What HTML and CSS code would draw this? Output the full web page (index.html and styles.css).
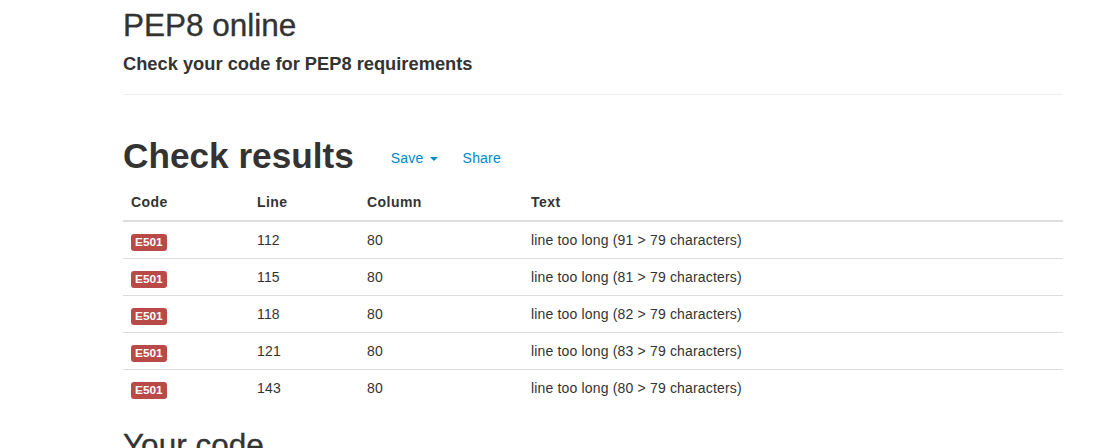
FILE: index.html
```html
<!DOCTYPE html>
<html>
<head>
<meta charset="utf-8">
<title>PEP8 online</title>
<link rel="stylesheet" href="styles.css">
</head>
<body>
<div class="container">
  <header class="page-header">
    <h1 class="site-title">PEP8 online</h1>
    <p class="site-sub">Check your code for PEP8 requirements</p>
  </header>

  <section class="results">
    <div class="results-head">
      <h2 class="results-title">Check results</h2>
      <nav class="results-actions">
        <a href="#" class="action">Save <span class="caret"></span></a>
        <a href="#" class="action">Share</a>
      </nav>
    </div>
    <table class="table">
      <thead>
        <tr><th class="c-code">Code</th><th class="c-line">Line</th><th class="c-col">Column</th><th>Text</th></tr>
      </thead>
      <tbody>
        <tr><td><span class="label">E501</span></td><td>112</td><td>80</td><td>line too long (91 &gt; 79 characters)</td></tr>
        <tr><td><span class="label">E501</span></td><td>115</td><td>80</td><td>line too long (81 &gt; 79 characters)</td></tr>
        <tr><td><span class="label">E501</span></td><td>118</td><td>80</td><td>line too long (82 &gt; 79 characters)</td></tr>
        <tr><td><span class="label">E501</span></td><td>121</td><td>80</td><td>line too long (83 &gt; 79 characters)</td></tr>
        <tr><td><span class="label">E501</span></td><td>143</td><td>80</td><td>line too long (80 &gt; 79 characters)</td></tr>
      </tbody>
    </table>
  </section>

  <section class="code">
    <h2 class="code-title">Your code</h2>
  </section>
</div>
</body>
</html>
```

FILE: styles.css
```css
html, body {
  margin: 0;
  padding: 0;
  background: #fff;
}
body {
  font-family: "Liberation Sans", Arial, Helvetica, sans-serif;
  font-size: 14px;
  line-height: 20px;
  color: #333;
}
.container {
  width: 940px;
  margin-left: 123px;
}
.page-header {
  border-bottom: 1px solid #eee;
  padding-bottom: 20px;
}
.site-title {
  margin: 7px 0 0;
  font-size: 31.5px;
  line-height: 36px;
  font-weight: normal;
  -webkit-text-stroke: 0.35px #333;
}
.site-sub {
  margin: 11px 0 0;
  font-size: 18.3px;
  line-height: 20px;
  font-weight: bold;
}
.results-head {
  display: flex;
  align-items: center;
  margin-top: 41px;
}
.results-title {
  margin: 0;
  font-size: 35.2px;
  line-height: 40px;
  font-weight: bold;
}
.results-actions {
  display: flex;
  gap: 25px;
  margin-left: 37px;
  margin-top: 4px;
  font-size: 14px;
  letter-spacing: 0.2px;
}
.action {
  color: #0088cc;
  text-decoration: none;
}
.caret {
  display: inline-block;
  width: 0;
  height: 0;
  vertical-align: middle;
  margin-left: 2px;
  border-top: 4px solid #0088cc;
  border-left: 4px solid transparent;
  border-right: 4px solid transparent;
}
.table {
  width: 100%;
  border-collapse: collapse;
  border-spacing: 0;
  margin-top: 8px;
  font-size: 14px;
  letter-spacing: 0.17px;
}
.table th, .table td {
  padding: 8px;
  line-height: 20px;
  text-align: left;
  vertical-align: top;
}
.table th {
  font-weight: bold;
  letter-spacing: 0.45px;
  border-bottom: 2px solid #ddd;
}
.table td {
  border-top: 1px solid #ddd;
}
.table tbody tr:first-child td {
  border-top: 0;
}
.c-code { width: 110px; }
.c-line { width: 94px; }
.c-col { width: 148px; }
.label {
  display: inline-block;
  padding: 2px 4px;
  margin: 4px 0 -1px;
  font-size: 11.844px;
  font-weight: bold;
  line-height: 13px;
  letter-spacing: 0;
  color: #fff;
  background: #b94a48;
  border-radius: 3px;
  vertical-align: top;
}
.code-title {
  margin: 21px 0 0;
  font-size: 31.5px;
  line-height: 36px;
  font-weight: normal;
  -webkit-text-stroke: 0.35px #333;
}
```
